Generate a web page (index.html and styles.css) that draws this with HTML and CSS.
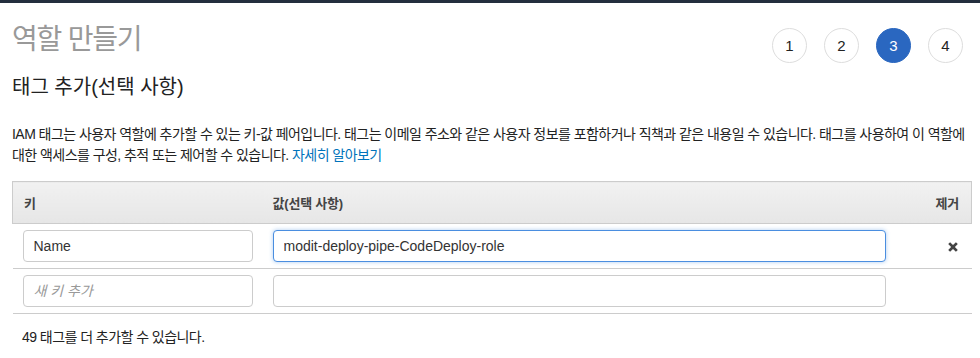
FILE: index.html
```html
<!DOCTYPE html>
<html lang="ko">
<head>
  <meta charset="UTF-8" />
  <title>역할 만들기</title>
  <link rel="stylesheet" href="styles.css">
</head>
<body>

  <div class="topbar"></div>

  <div class="page">
    <div class="head">
      <h1>역할 만들기</h1>
      <div class="steps">
        <span class="step">1</span>
        <span class="step">2</span>
        <span class="step active">3</span>
        <span class="step">4</span>
      </div>
    </div>

    <h2>태그 추가(선택 사항)</h2>

    <p class="intro">IAM 태그는 사용자 역할에 추가할 수 있는 키-값 페어입니다. 태그는 이메일 주소와 같은 사용자 정보를 포함하거나 직책과 같은 내용일 수 있습니다. 태그를 사용하여 이 역할에 대한 액세스를 구성, 추적 또는 제어할 수 있습니다. <a href="#">자세히 알아보기</a></p>

    <table class="tags">
      <thead>
        <tr>
          <th class="col-key">키</th>
          <th class="col-value">값(선택 사항)</th>
          <th class="col-remove">제거</th>
        </tr>
      </thead>
      <tbody>
        <tr>
          <td><input type="text" class="field" value="Name" /></td>
          <td><input type="text" class="field focused" value="modit-deploy-pipe-CodeDeploy-role" /></td>
          <td class="col-remove">
            <button class="remove" title="제거">
              <svg width="12" height="12" viewBox="0 0 12 12">
                <path d="M1.2 3.1 L3.1 1.2 L6 4.1 L8.9 1.2 L10.8 3.1 L7.9 6 L10.8 8.9 L8.9 10.8 L6 7.9 L3.1 10.8 L1.2 8.9 L4.1 6 Z" fill="#444"/>
              </svg>
            </button>
          </td>
        </tr>
        <tr>
          <td><input type="text" class="field" placeholder="새 키 추가" /></td>
          <td><input type="text" class="field" /></td>
          <td></td>
        </tr>
      </tbody>
    </table>

    <p class="remaining">49 태그를 더 추가할 수 있습니다.</p>
  </div>

</body>
</html>
```

FILE: styles.css
```css
body {
  margin: 0;
  font-family: "Liberation Sans", "Noto Sans CJK KR", sans-serif;
  background: #fff;
  color: #222;
}

.topbar {
  height: 3px;
  background: #232f3e;
}

.page {
  padding: 0 8px 0 12px;
}

.head {
  display: flex;
  justify-content: space-between;
  align-items: flex-start;
}

h1 {
  margin: 20px 0 0;
  font-size: 28px;
  line-height: 34px;
  font-weight: normal;
  letter-spacing: -1.2px;
  color: #999;
}

.steps {
  display: flex;
  gap: 17px;
  margin-top: 25px;
  padding-right: 9px;
}

.step {
  width: 33px;
  height: 33px;
  border: 1px solid #ddd;
  border-radius: 50%;
  display: flex;
  align-items: center;
  justify-content: center;
  font-size: 15px;
  color: #222;
}

.step.active {
  background: #2a67c0;
  border-color: #2a67c0;
  color: #fff;
}

h2 {
  margin: 12px 0 0;
  font-size: 20px;
  line-height: 24px;
  font-weight: normal;
  letter-spacing: 0;
  color: #222;
}

.intro {
  margin: 25px 0 0;
  font-size: 14px;
  line-height: 21px;
  letter-spacing: -0.55px;
  color: #222;
}

.intro a {
  display: inline-block;
  line-height: 21px;
  color: #0073bb;
  text-decoration: none;
}

.tags {
  width: 960px;
  margin-top: 15px;
  border-collapse: collapse;
  table-layout: fixed;
}

.tags th {
  box-sizing: border-box;
  height: 42px;
  padding: 0 10px;
  text-align: left;
  font-size: 13px;
  letter-spacing: -0.2px;
  font-weight: bold;
  color: #444;
  background: linear-gradient(#f1f1f1, #e6e6e6);
  border-top: 1px solid #ccc;
  border-bottom: 1px solid #ccc;
}

.tags th.col-key {
  width: 250px;
  border-left: 1px solid #ccc;
  padding-left: 11px;
}

.tags th.col-value {
  width: 633px;
}

.tags th.col-remove {
  text-align: right;
  padding-right: 12px;
  border-right: 1px solid #ccc;
}

.tags td {
  padding: 6px 10px;
  border-bottom: 1px solid #ccc;
}

.tags td.col-remove {
  text-align: right;
  padding-right: 13px;
}

.field {
  box-sizing: border-box;
  width: 100%;
  height: 32px;
  padding: 0 10px;
  border: 1px solid #ccc;
  border-radius: 4px;
  font-family: "Liberation Sans", "Noto Sans CJK KR", sans-serif;
  font-size: 14px;
  color: #333;
  outline: none;
}

.field::placeholder {
  color: #999;
  font-style: italic;
}

.field.focused {
  border-color: #4a8ee0;
  box-shadow: 0 0 4px rgba(74, 142, 224, 0.45);
}

.remove {
  background: none;
  border: none;
  padding: 0;
  cursor: pointer;
  display: inline-flex;
  vertical-align: middle;
}

.remaining {
  margin: 13px 0 0 10px;
  font-size: 14px;
  line-height: 20px;
  letter-spacing: -0.55px;
  color: #222;
}
```
